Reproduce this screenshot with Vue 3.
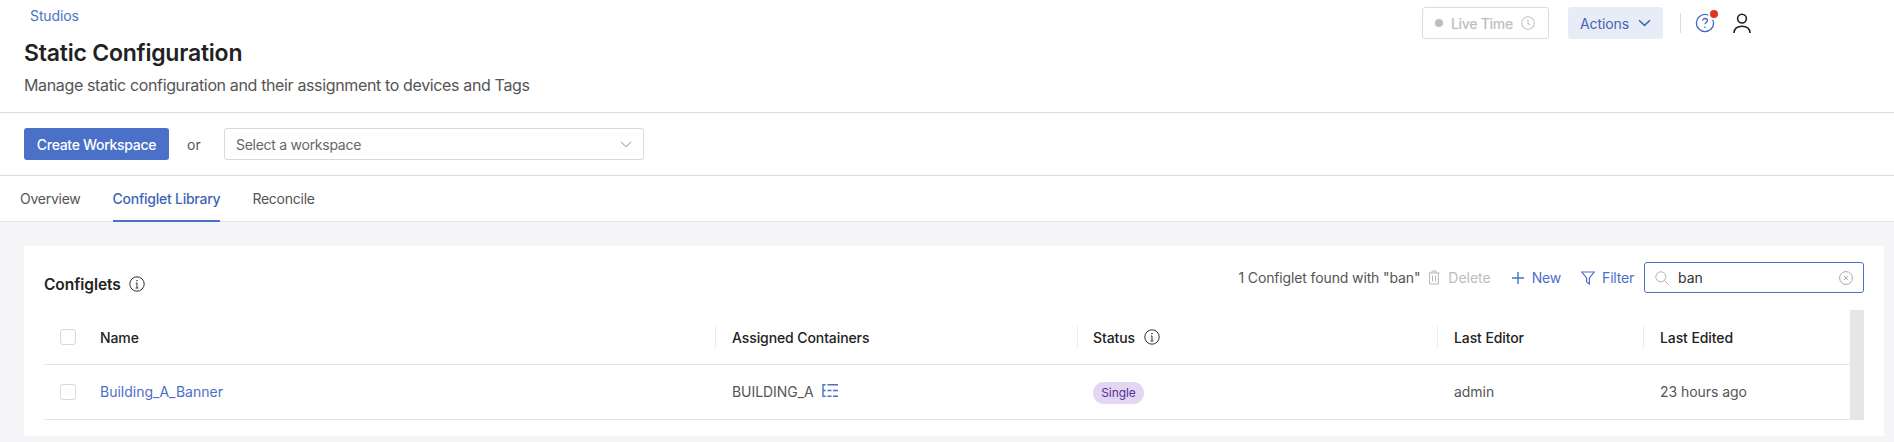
<script setup>
const headers = [
  { label: 'Assigned Containers' },
  { label: 'Status', info: true },
  { label: 'Last Editor' },
  { label: 'Last Edited' },
]
</script>

<template>
  <div class="page">
    <header class="head">
      <div class="head-left">
        <a class="crumb">Studios</a>
        <h1>Static Configuration</h1>
        <p>Manage static configuration and their assignment to devices and Tags</p>
      </div>
      <div class="head-right">
        <div class="live">
          <span class="dot"></span>
          <span class="live-text">Live Time</span>
          <svg width="14" height="14" viewBox="0 0 14 14" fill="none" stroke="#c4c4c4" stroke-width="1.1"><circle cx="7" cy="7" r="6.3"/><path d="M7 3.4V7.4L9.2 9"/></svg>
        </div>
        <div class="actions">
          <span>Actions</span>
          <svg width="13" height="8" viewBox="0 0 13 8" fill="none" stroke="#3f64b8" stroke-width="1.5"><path d="M1 1.2L6.5 6.4L12 1.2"/></svg>
        </div>
        <span class="vsep"></span>
        <div class="help">
          <svg width="20" height="20" viewBox="0 0 20 20" fill="none" stroke="#3f6ac4" stroke-width="1.3"><circle cx="10" cy="10" r="8.6"/><path d="M7.6 7.8C7.6 6.4 8.7 5.5 10 5.5C11.4 5.5 12.4 6.4 12.4 7.6C12.4 9.4 10 9.4 10 11.3"/><path d="M10 13.4V14.9"/></svg>
          <span class="badge"></span>
        </div>
        <svg class="user" width="18" height="21" viewBox="0 0 18 21" fill="none" stroke="#1f1f1f" stroke-width="1.6"><circle cx="9" cy="5.6" r="4.4"/><path d="M1 20C1 15.6 4.4 13.2 9 13.2C13.6 13.2 17 15.6 17 20"/></svg>
      </div>
    </header>

    <div class="workspace">
      <button class="create">Create Workspace</button>
      <span class="or">or</span>
      <div class="select">
        <span>Select a workspace</span>
        <svg width="12" height="7" viewBox="0 0 12 7" fill="none" stroke="#8a8a8a" stroke-width="1"><path d="M1 .8L6 5.8L11 .8"/></svg>
      </div>
    </div>

    <nav class="tabs">
      <a class="tab">Overview</a>
      <a class="tab active">Configlet Library</a>
      <a class="tab">Reconcile</a>
    </nav>

    <main class="content">
      <section class="card">
        <div class="toolbar">
          <div class="title">
            <span>Configlets</span>
            <svg width="16" height="16" viewBox="0 0 16 16" fill="none" stroke="#333" stroke-width="1"><circle cx="8" cy="8" r="7.2"/><path d="M8 7V12M6.6 12H9.4M6.8 7H8"/><path d="M8 4V5.2" stroke-width="1.3"/></svg>
          </div>
          <div class="tools">
            <span class="found">1 Configlet found with "ban"</span>
            <span class="tool muted">
              <svg width="12" height="15" viewBox="0 0 12 15" fill="none" stroke="#b8b8b8" stroke-width="1"><path d="M.5 3H11.5M4 3V1H8V3M1.6 3V14H10.4V3M4.5 5.5V11.5M7.5 5.5V11.5"/></svg>
              Delete
            </span>
            <span class="tool link new">
              <svg width="12" height="12" viewBox="0 0 12 12" fill="none" stroke="#4a70c8" stroke-width="1.4"><path d="M6 0V12M0 6H12"/></svg>
              New
            </span>
            <span class="tool link filter">
              <svg width="14" height="14" viewBox="0 0 14 14" fill="none" stroke="#4a70c8" stroke-width="1.2"><path d="M.8 1H13.2L8.4 7V13L5.6 11V7Z"/></svg>
              Filter
            </span>
            <div class="search">
              <svg width="14" height="14" viewBox="0 0 14 14" fill="none" stroke="#b0b0b0" stroke-width="1"><circle cx="5.8" cy="5.8" r="5"/><path d="M9.4 9.4L13.5 13.5"/></svg>
              <span class="term">ban</span>
              <svg class="clear" width="14" height="14" viewBox="0 0 14 14" fill="none" stroke="#a8a8a8" stroke-width="1"><circle cx="7" cy="7" r="6.4"/><path d="M4.8 4.8L9.2 9.2M9.2 4.8L4.8 9.2"/></svg>
            </div>
          </div>
        </div>

        <div class="table-wrap">
          <div class="table">
            <div class="row header">
              <div class="cell check"><span class="box"></span></div>
              <div class="cell name">Name</div>
              <div v-for="h in headers" :key="h.label" class="cell col" :class="{ status: h.info }">
                <span>{{ h.label }}</span>
                <svg v-if="h.info" width="16" height="16" viewBox="0 0 16 16" fill="none" stroke="#333" stroke-width="1"><circle cx="8" cy="8" r="7.2"/><path d="M8 7V12M6.6 12H9.4M6.8 7H8"/><path d="M8 4V5.2" stroke-width="1.3"/></svg>
              </div>
            </div>
            <div class="row body">
              <div class="cell check"><span class="box"></span></div>
              <div class="cell name"><a class="blue">Building_A_Banner</a></div>
              <div class="cell col">
                <span>BUILDING_A</span>
                <svg class="tree" width="16" height="13" viewBox="0 0 16 13" fill="none" stroke="#4a70c8" stroke-width="1.4"><path d="M1 0V12.3H3.6M1 6.5H3.6M1 .7H3.6M5.5 .7H16M5.5 6.5H9.5M11 6.5H16M5.5 12.3H9.5M11 12.3H16"/></svg>
              </div>
              <div class="cell col status"><span class="pill">Single</span></div>
              <div class="cell col">admin</div>
              <div class="cell col">23 hours ago</div>
            </div>
          </div>
          <div class="scroll"></div>
        </div>
      </section>
    </main>
  </div>
</template>

<style>
html, body { margin: 0; background: #fff; }
</style>

<style scoped>
.page {
  height: 442px;
  overflow: hidden;
  display: flex;
  flex-direction: column;
  font-family: Inter, "Liberation Sans", sans-serif;
  font-size: 14px;
  color: #555;
  background: #f5f5f7;
}
.head {
  height: 113px;
  box-sizing: border-box;
  flex: none;
  background: #fff;
  border-bottom: 1px solid #dcdcdc;
  display: flex;
  justify-content: space-between;
  align-items: flex-start;
  padding: 7px 143px 0 24px;
}
.crumb {
  display: block;
  margin-left: 6px;
  color: #4a70c8;
  line-height: 18px;
  letter-spacing: -0.1px;
}
h1 {
  margin: 15px 0 0;
  font-size: 23px;
  line-height: 26px;
  font-weight: 600;
  color: #222;
  letter-spacing: -0.22px;
}
p {
  margin: 8px 0 0;
  font-size: 16px;
  line-height: 22px;
  color: #555;
  letter-spacing: -0.36px;
}
.head-right {
  display: flex;
  align-items: center;
  height: 32px;
}
.live {
  box-sizing: border-box;
  width: 127px;
  height: 32px;
  border: 1px solid #dcdcdc;
  border-radius: 3px;
  display: flex;
  align-items: center;
  gap: 8px;
  padding-left: 12px;
  color: #bdbdbd;
  font-weight: 500;
}
.live-text { letter-spacing: -0.3px; }
.dot {
  width: 8px;
  height: 8px;
  border-radius: 50%;
  background: #bdbdbd;
}
.actions {
  box-sizing: border-box;
  width: 95px;
  height: 32px;
  margin-left: 19px;
  border-radius: 3px;
  background: #e8ecf7;
  color: #3f64b8;
  display: flex;
  align-items: center;
  justify-content: center;
  gap: 9px;
  letter-spacing: -0.1px;
}
.vsep {
  width: 1px;
  height: 20px;
  margin-left: 17px;
  background: #dcdcdc;
}
.help {
  position: relative;
  width: 20px;
  height: 20px;
  margin-left: 14px;
}
.help svg { display: block; }
.badge {
  position: absolute;
  top: -5px;
  right: -5px;
  width: 8px;
  height: 8px;
  border: 2px solid #fff;
  border-radius: 50%;
  background: #e0321c;
}
.user { margin-left: 18px; }
.workspace {
  height: 63px;
  box-sizing: border-box;
  flex: none;
  background: #fff;
  border-bottom: 1px solid #dcdcdc;
  display: flex;
  align-items: center;
  padding: 0 24px;
}
.create {
  box-sizing: border-box;
  width: 145px;
  height: 32px;
  padding: 0;
  border: 0;
  border-radius: 3px;
  background: #4a70c8;
  color: #fff;
  font: 500 14px Inter, "Liberation Sans", sans-serif;
  letter-spacing: -0.3px;
}
.or { margin-left: 18px; width: 37px; }
.select {
  box-sizing: border-box;
  width: 420px;
  height: 32px;
  border: 1px solid #d9d9d9;
  border-radius: 3px;
  display: flex;
  align-items: center;
  justify-content: space-between;
  padding: 0 11px;
  color: #666;
  letter-spacing: -0.27px;
}
.tabs {
  height: 46px;
  box-sizing: border-box;
  flex: none;
  background: #fff;
  border-bottom: 1px solid #e6e6e8;
  display: flex;
  gap: 32px;
  padding-left: 20px;
  letter-spacing: -0.25px;
}
.tab {
  height: 46px;
  box-sizing: border-box;
  line-height: 46px;
  color: #555;
}
.tab.active {
  color: #3f64b8;
  font-weight: 500;
  border-bottom: 2px solid #4a70c8;
}
.content {
  flex: 1;
  padding: 24px 10px 6px 24px;
}
.card {
  height: 190px;
  box-sizing: border-box;
  background: #fff;
  padding: 0 20px;
}
.toolbar {
  height: 64px;
  display: flex;
  justify-content: space-between;
}
.title {
  display: flex;
  align-items: center;
  gap: 8px;
  height: 76px;
  font-size: 15.5px;
  font-weight: 600;
  color: #222;
  letter-spacing: -0.05px;
}
.tools {
  display: flex;
  align-items: center;
  height: 31px;
  margin-top: 16px;
}
.found { margin-right: 8px; letter-spacing: -0.13px; }
.tool {
  display: flex;
  align-items: center;
  gap: 8px;
}
.muted { color: #bdbdbd; margin-right: 21px; }
.link { color: #4a70c8; letter-spacing: -0.2px; }
.new { margin-right: 20px; }
.filter { margin-right: 10px; gap: 7px; }
.search {
  box-sizing: border-box;
  width: 220px;
  height: 31px;
  border: 1px solid #4a70c8;
  border-radius: 3px;
  display: flex;
  align-items: center;
  padding: 0 10px;
  gap: 9px;
}
.term { color: #333; flex: 1; }
.table-wrap {
  display: flex;
  height: 110px;
}
.table { flex: 1; }
.scroll {
  width: 14px;
  flex: none;
  background: #e5e6e8;
}
.row {
  display: grid;
  grid-template-columns: 56px 615px 362px 360px 206px 206px;
  box-sizing: border-box;
  border-bottom: 1px solid #e4e4e4;
}
.row.header { height: 55px; color: #222; font-weight: 500; letter-spacing: -0.1px; }
.row.body { height: 55px; letter-spacing: -0.05px; }
.row.body .name,
.row.body .col { padding-bottom: 1px; }
.cell {
  display: flex;
  align-items: center;
  min-width: 0;
}
.check { padding-left: 16px; }
.box {
  box-sizing: border-box;
  width: 16px;
  height: 16px;
  border: 1px solid #d9d9d9;
  border-radius: 3px;
  background: #fff;
}
.col {
  padding-left: 17px;
  gap: 8px;
}
.col.status {
  padding-left: 16px;
  gap: 9px;
}
.header .col {
  position: relative;
}
.header .col::before {
  content: "";
  position: absolute;
  left: 0;
  top: 16px;
  height: 22px;
  width: 1px;
  background: #ececec;
}
.blue { color: #4a70c8; letter-spacing: 0; }
.pill {
  box-sizing: border-box;
  width: 51px;
  height: 22px;
  line-height: 22px;
  margin-top: 2px;
  text-align: center;
  border-radius: 11px;
  background: #e2d6f3;
  color: #5b2d8e;
  font-size: 12px;
}
.tree { margin-top: -3px; }
</style>
